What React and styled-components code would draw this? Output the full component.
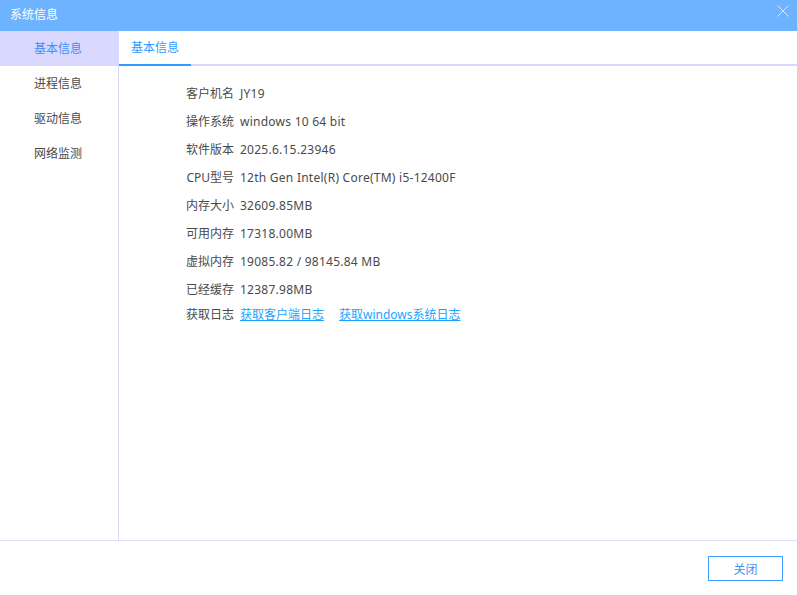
import React from "react";
import styled, { createGlobalStyle } from "styled-components";

const GlobalStyle = createGlobalStyle`
  html, body {
    margin: 0;
    padding: 0;
    background: #fff;
  }
  body {
    font-family: "Noto Sans", "Noto Sans CJK SC", sans-serif;
    font-size: 12px;
    color: #4a4a4a;
  }
`;

const Window = styled.div`
  width: 797px;
  height: 595px;
  display: flex;
  flex-direction: column;
  overflow: hidden;
`;

const TitleBar = styled.div`
  height: 31px;
  flex: none;
  display: flex;
  align-items: center;
  justify-content: space-between;
  padding: 0 8px 3px 10px;
  box-sizing: border-box;
  background: #6db3ff;
  color: #fff;
`;

const CloseIcon = styled.svg`
  width: 12px;
  height: 12px;
  display: block;
  align-self: flex-start;
  margin-top: 5px;
`;

const Body = styled.div`
  height: 509px;
  flex: none;
  display: flex;
`;

const Sidebar = styled.div`
  width: 119px;
  flex: none;
  box-sizing: border-box;
  border-right: 1px solid #d9d9ff;
`;

const SideItem = styled.div`
  height: 35px;
  line-height: 36px;
  padding-left: 34px;
  background: ${(p) => (p.$active ? "#d9d9ff" : "transparent")};
  color: ${(p) => (p.$active ? "#3e8ef7" : "#4a4a4a")};
`;

const Main = styled.div`
  flex: 1;
  display: flex;
  flex-direction: column;
`;

const TabBar = styled.div`
  height: 35px;
  flex: none;
  box-sizing: border-box;
  display: flex;
  border-bottom: 2px solid #d9d9ff;
`;

const Tab = styled.div`
  width: 72px;
  height: 35px;
  box-sizing: border-box;
  line-height: 34px;
  padding-left: 12px;
  color: #2f9bff;
  border-bottom: 2px solid #2f9bff;
`;

const InfoList = styled.div`
  padding-top: 13px;
  display: flex;
  flex-direction: column;
`;

const InfoRow = styled.div`
  height: ${(p) => (p.$short ? "22px" : "28px")};
  display: flex;
  align-items: center;
`;

const Label = styled.div`
  width: 115px;
  flex: none;
  text-align: right;
  margin-right: 6px;
`;

const Value = styled.div`
  white-space: pre;
  letter-spacing: ${(p) => (p.$plain ? "0" : "0.25px")};
`;

const LogLink = styled.a`
  color: #1aa3ff;
  text-decoration: underline;
  margin-right: 15px;
  cursor: pointer;
`;

const Footer = styled.div`
  flex: 1;
  box-sizing: border-box;
  border-top: 1px solid #e2dcfb;
  display: flex;
  justify-content: flex-end;
  padding: 15px 14px 0 0;
`;

const CloseButton = styled.button`
  width: 75px;
  height: 25px;
  box-sizing: border-box;
  border: 1px solid #3e9bff;
  background: #fff;
  color: #3e8ef7;
  font: inherit;
  padding: 0;
`;

const rows = [
  ["客户机名", "JY19"],
  ["操作系统", "windows 10 64 bit"],
  ["软件版本", "2025.6.15.23946"],
  ["CPU型号", "12th Gen Intel(R) Core(TM) i5-12400F"],
  ["内存大小", "32609.85MB"],
  ["可用内存", "17318.00MB"],
  ["虚拟内存", "19085.82 / 98145.84 MB"],
  ["已经缓存", "12387.98MB"],
];

const menu = ["基本信息", "进程信息", "驱动信息", "网络监测"];

export default function App() {
  return (
    <>
      <GlobalStyle />
      <Window>
        <TitleBar>
          系统信息
          <CloseIcon viewBox="0 0 12 12">
            <path d="M0.5 0.5 L11.5 11.5 M11.5 0.5 L0.5 11.5" stroke="#d6e6ff" strokeWidth="1" fill="none" />
          </CloseIcon>
        </TitleBar>
        <Body>
          <Sidebar>
            {menu.map((m, i) => (
              <SideItem key={m} $active={i === 0}>{m}</SideItem>
            ))}
          </Sidebar>
          <Main>
            <TabBar>
              <Tab>基本信息</Tab>
            </TabBar>
            <InfoList>
              {rows.map(([label, value]) => (
                <InfoRow key={label}>
                  <Label>{label}</Label>
                  <Value>{value}</Value>
                </InfoRow>
              ))}
              <InfoRow $short>
                <Label>获取日志</Label>
                <Value $plain>
                  <LogLink>获取客户端日志</LogLink>
                  <LogLink>获取windows系统日志</LogLink>
                </Value>
              </InfoRow>
            </InfoList>
          </Main>
        </Body>
        <Footer>
          <CloseButton>关闭</CloseButton>
        </Footer>
      </Window>
    </>
  );
}
